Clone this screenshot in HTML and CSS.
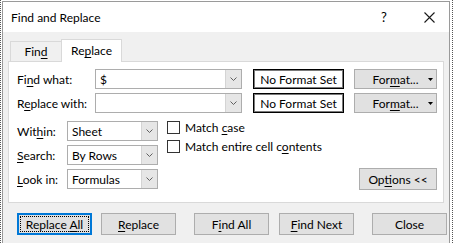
FILE: index.html
```html
<!DOCTYPE html>
<html>
<head>
<meta charset="utf-8">
<link rel="stylesheet" href="styles.css">
</head>
<body>
<div class="dialog">
  <div class="titlebar">
    <span class="title">Find and Replace</span>
    <span class="help">?</span>
    <svg class="close" width="11" height="11" viewBox="0 0 11 11"><path d="M0.5 0.5 L10.5 10.5 M10.5 0.5 L0.5 10.5" stroke="#1a1a1a" stroke-width="1.1" fill="none"/></svg>
  </div>
  <div class="body">
    <div class="tabs">
      <div class="tab"><span>Fin<u>d</u></span></div>
      <div class="tab active"><span>Re<u>p</u>lace</span></div>
    </div>
    <div class="panel">
      <div class="row">
        <span class="lbl lbl-top">Fi<u>n</u>d what:</span>
        <div class="combo combo-wide"><span class="val">$</span><span class="drop"><svg width="7" height="4" viewBox="0 0 7 4"><path d="M0.5 0.5 L3.5 3.5 L6.5 0.5" stroke="#606060" fill="none"/></svg></span></div>
        <div class="fmtset">No Format Set</div>
        <div class="btn fmt"><span></span><span>For<u>m</u>at...</span><svg class="caret" width="5" height="3" viewBox="0 0 5 3"><path d="M0 0 H5 L2.5 3 Z" fill="#000"/></svg></div>
      </div>
      <div class="row">
        <span class="lbl lbl-top">R<u>e</u>place with:</span>
        <div class="combo combo-wide"><span class="val"></span><span class="drop"><svg width="7" height="4" viewBox="0 0 7 4"><path d="M0.5 0.5 L3.5 3.5 L6.5 0.5" stroke="#606060" fill="none"/></svg></span></div>
        <div class="fmtset">No Format Set</div>
        <div class="btn fmt"><span></span><span>For<u>m</u>at...</span><svg class="caret" width="5" height="3" viewBox="0 0 5 3"><path d="M0 0 H5 L2.5 3 Z" fill="#000"/></svg></div>
      </div>
      <div class="lower">
        <div class="opts">
          <div class="orow">
            <span class="lbl lbl-low">Wit<u>h</u>in:</span>
            <div class="combo combo-sm"><span class="val">Sheet</span><span class="drop"><svg width="7" height="4" viewBox="0 0 7 4"><path d="M0.5 0.5 L3.5 3.5 L6.5 0.5" stroke="#606060" fill="none"/></svg></span></div>
          </div>
          <div class="orow">
            <span class="lbl lbl-low"><u>S</u>earch:</span>
            <div class="combo combo-sm"><span class="val">By Rows</span><span class="drop"><svg width="7" height="4" viewBox="0 0 7 4"><path d="M0.5 0.5 L3.5 3.5 L6.5 0.5" stroke="#606060" fill="none"/></svg></span></div>
          </div>
          <div class="orow">
            <span class="lbl lbl-low"><u>L</u>ook in:</span>
            <div class="combo combo-sm"><span class="val">Formulas</span><span class="drop"><svg width="7" height="4" viewBox="0 0 7 4"><path d="M0.5 0.5 L3.5 3.5 L6.5 0.5" stroke="#606060" fill="none"/></svg></span></div>
          </div>
        </div>
        <div class="checks">
          <label class="chk"><span class="box"></span><span>Match <u>c</u>ase</span></label>
          <label class="chk"><span class="box"></span><span>Match entire cell c<u>o</u>ntents</span></label>
        </div>
        <div class="btn optbtn"><span>Op<u>t</u>ions &lt;&lt;</span></div>
      </div>
    </div>
    <div class="actions">
      <div class="btn act default"><span>Replace <u>A</u>ll</span></div>
      <div class="btn act a2"><span><u>R</u>eplace</span></div>
      <div class="btn act a3"><span>F<u>i</u>nd All</span></div>
      <div class="btn act a4"><span><u>F</u>ind Next</span></div>
      <div class="btn act a5"><span>Close</span></div>
    </div>
  </div>
</div>
</body>
</html>
```

FILE: styles.css
```css
html {
  overflow: hidden;
  background-color: #fff;
  background-image:
    repeating-linear-gradient(to bottom, #555 0 1px, #fff 1px 2px),
    repeating-linear-gradient(to bottom, #555 0 1px, #fff 1px 2px);
  background-size: 1px 100%, 1px 100%;
  background-position: 0 0, 452px 0;
  background-repeat: no-repeat;
}
body {
  margin: 0;
  padding: 1px 0 0 2px;
  font-family: "Segoe UI", Lato, sans-serif;
  font-size: 12px;
  color: #000;
  overflow: hidden;
  height: 242px;
}
u { text-decoration: underline; text-underline-offset: 2px; text-decoration-thickness: 1px; }

.dialog {
  width: 446px;
  height: 241px;
  border: 1px solid #9a9a9a;
  border-bottom: none;
  background: #f0f0f0;
}
.titlebar {
  height: 30px;
  background: #fff;
  display: flex;
  align-items: center;
  padding-left: 8px;
}
.title { font-size: 12px; }
.help { margin-left: auto; font-size: 13px; width: 10px; text-align: center; margin-right: 35px; }
.close { margin-right: 14px; }

.tabs {
  display: flex;
  align-items: flex-end;
  padding-top: 7px;
  margin-left: 7px;
  height: 22px;
  position: relative;
  z-index: 1;
}
.tab {
  height: 19px;
  width: 50px;
  border: 1px solid #d9d9d9;
  border-bottom: none;
  border-right: none;
  background: #f0f0f0;
  display: flex;
  align-items: center;
  justify-content: center;
}
.tab.active {
  width: 61px;
  background: #fff;
  border-right: 1px solid #d9d9d9;
  margin-bottom: -1px;
  padding-bottom: 1px;
  box-sizing: border-box;
  height: 23px;
}
.panel {
  margin-left: 5px;
  width: 420px;
  height: 133px;
  border: 1px solid #d9d9d9;
  background: #fff;
  padding: 7px 6px 0 8px;
}
.row {
  display: flex;
  align-items: center;
  height: 20px;
  margin-bottom: 4px;
}
.lbl-top { width: 78px; }
.lbl-low { width: 50px; }
.combo {
  display: flex;
  height: 20px;
  box-sizing: border-box;
  border: 1px solid #adadad;
  background: #fff;
}
.combo-wide { width: 147px; }
.combo-sm { width: 91px; height: 21px; }
.val { flex: 1; padding-left: 4px; display: flex; align-items: center; }
.drop {
  width: 15px;
  background: #e6e6e6;
  border-left: 1px solid #d4d4d4;
  display: flex;
  align-items: center;
  justify-content: center;
}
.fmtset {
  margin-left: 11px;
  width: 91px;
  height: 20px;
  box-sizing: border-box;
  border: 1px solid #000;
  box-shadow: inset 0 0 0 1px #7a7a7a;
  display: flex;
  align-items: center;
  justify-content: center;
}
.btn {
  background: #e1e1e1;
  border: 1px solid #adadad;
  box-sizing: border-box;
  display: flex;
  align-items: center;
  justify-content: center;
}
.fmt {
  margin-left: 10px;
  width: 83px;
  height: 20px;
  display: grid;
  grid-template-columns: 1fr auto 1fr;
  align-items: center;
}
.caret { justify-self: end; margin-right: 3px; }

.lower {
  display: flex;
  margin-top: 8px;
  align-items: flex-start;
}
.opts { display: flex; flex-direction: column; gap: 4px; }
.orow { display: flex; align-items: center; height: 20px; }
.orow .combo-sm { height: 20px; }
.checks {
  margin-left: 9px;
  display: flex;
  flex-direction: column;
  gap: 6px;
}
.chk { display: flex; align-items: center; height: 13px; }
.box {
  width: 13px; height: 13px;
  box-sizing: border-box;
  border: 1px solid #333;
  background: #fff;
  margin-right: 5px;
}
.optbtn {
  margin-left: auto;
  margin-top: 47px;
  width: 78px;
  height: 22px;
}

.actions {
  display: flex;
  margin-top: 10px;
  padding-left: 14px;
}
.act { width: 75px; height: 22px; }
.a2 { margin-left: 9px; }
.a3 { margin-left: 18px; }
.a4 { margin-left: 10px; }
.a5 { margin-left: 18px; }
.default {
  border: 2px solid #0078d7;
  outline: 1px dotted #000;
  outline-offset: -4px;
}
```
